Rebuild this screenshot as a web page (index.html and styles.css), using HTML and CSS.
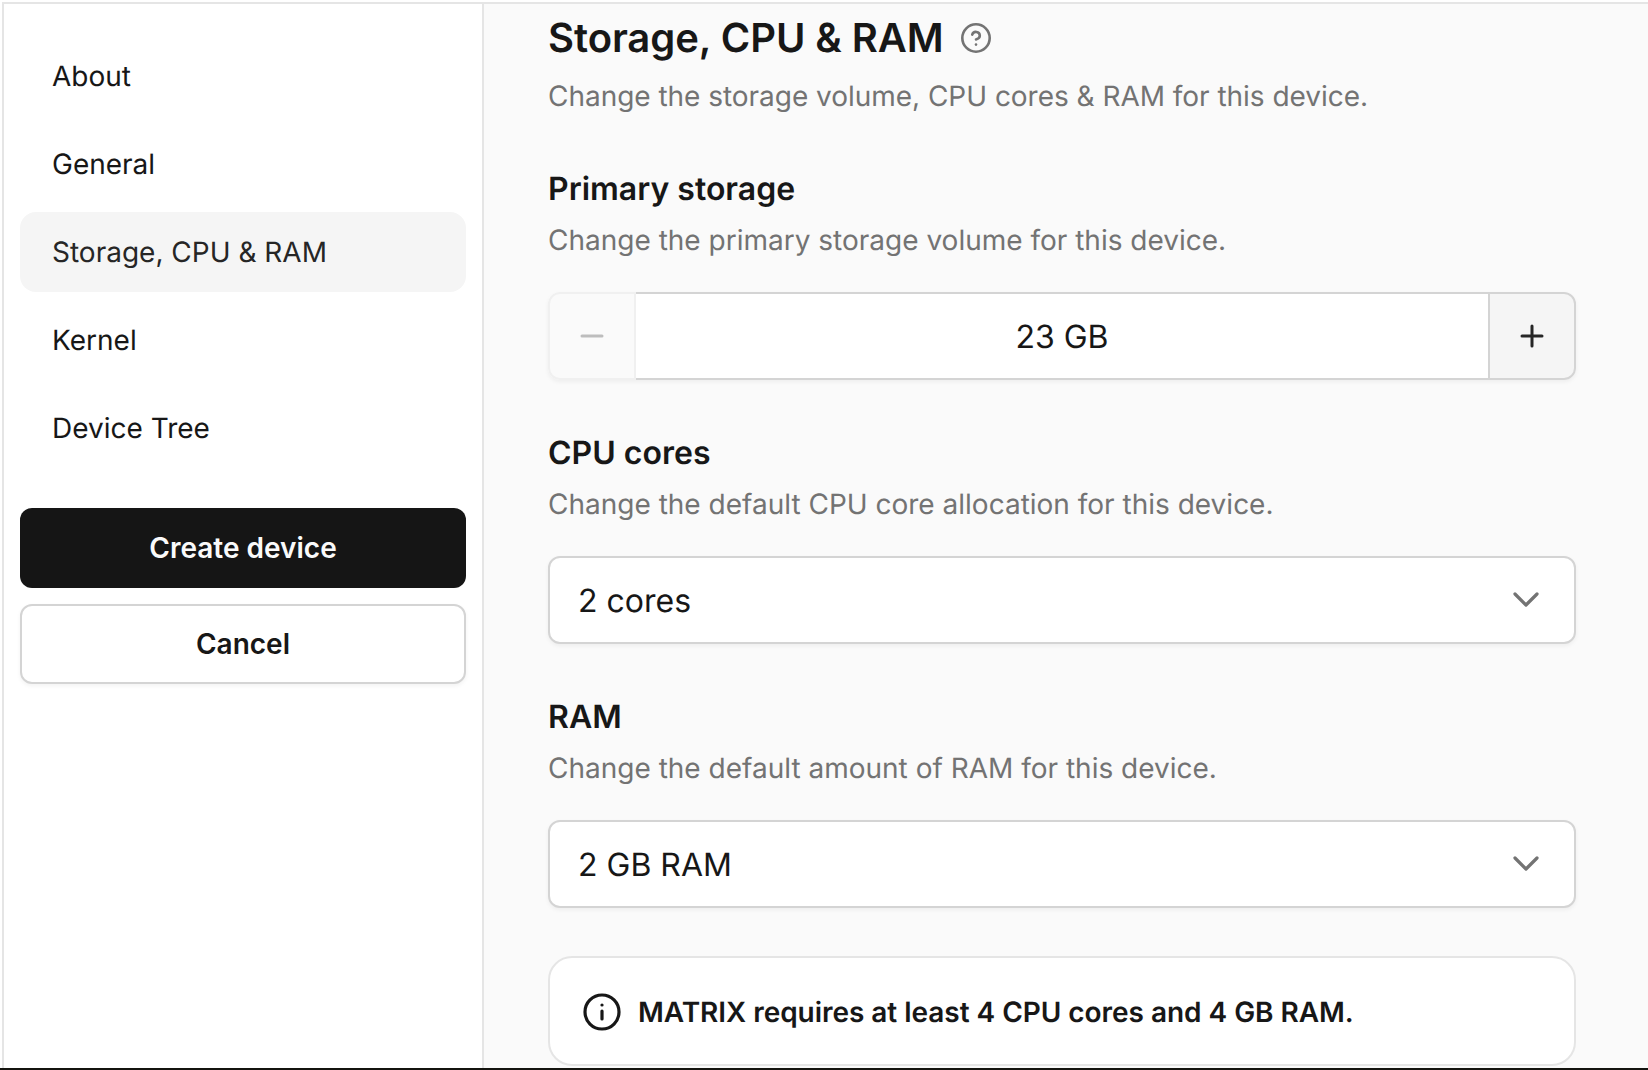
FILE: index.html
```html
<!DOCTYPE html>
<html lang="en">
  <head>
    <meta charset="UTF-8" />
    <meta name="viewport" content="width=device-width, initial-scale=1.0" />
    <title>Storage, CPU &amp; RAM</title>
    <link rel="stylesheet" href="styles.css">
  </head>
  <body>
    <div class="window">
      <aside class="sidebar">
        <nav class="nav">
          <a class="nav-item">About</a>
          <a class="nav-item">General</a>
          <a class="nav-item active">Storage, CPU &amp; RAM</a>
          <a class="nav-item">Kernel</a>
          <a class="nav-item">Device Tree</a>
        </nav>
        <div class="actions">
          <button class="btn btn-primary">Create device</button>
          <button class="btn btn-secondary">Cancel</button>
        </div>
      </aside>
      <main class="content">
        <header class="page-head">
          <h1>Storage, CPU &amp; RAM
            <svg class="help-icon" viewBox="0 0 32 32" width="32" height="32" fill="none" stroke="#737373" stroke-width="2.6" stroke-linecap="round" stroke-linejoin="round">
              <circle cx="16" cy="16" r="13.7" />
              <path d="M12.2 12.6a3.9 3.9 0 0 1 7.6 1.2c0 2.6-3.8 3.6-3.8 3.6" />
              <path d="M16 22.6h.01" />
            </svg>
          </h1>
          <p class="muted">Change the storage volume, CPU cores &amp; RAM for this device.</p>
        </header>

        <section class="field">
          <h2>Primary storage</h2>
          <p class="muted">Change the primary storage volume for this device.</p>
          <div class="stepper">
            <button class="step step-minus">
              <svg viewBox="0 0 24 24" width="24" height="24" fill="none" stroke="#bdbdbd" stroke-width="3" stroke-linecap="round"><path d="M2 12h20" /></svg>
            </button>
            <div class="step-value">23 GB</div>
            <button class="step step-plus">
              <svg viewBox="0 0 24 24" width="24" height="24" fill="none" stroke="#262626" stroke-width="3" stroke-linecap="round"><path d="M2 12h20M12 2v20" /></svg>
            </button>
          </div>
        </section>

        <section class="field">
          <h2>CPU cores</h2>
          <p class="muted">Change the default CPU core allocation for this device.</p>
          <div class="select">
            <span>2 cores</span>
            <svg viewBox="0 0 28 16" width="28" height="16" fill="none" stroke="#737373" stroke-width="3.2" stroke-linecap="round" stroke-linejoin="round"><path d="M3 2l11 11L25 2" /></svg>
          </div>
        </section>

        <section class="field">
          <h2>RAM</h2>
          <p class="muted">Change the default amount of RAM for this device.</p>
          <div class="select">
            <span>2 GB RAM</span>
            <svg viewBox="0 0 28 16" width="28" height="16" fill="none" stroke="#737373" stroke-width="3.2" stroke-linecap="round" stroke-linejoin="round"><path d="M3 2l11 11L25 2" /></svg>
          </div>
        </section>

        <div class="notice">
          <svg viewBox="0 0 40 40" width="40" height="40" fill="none" stroke="#171717" stroke-width="3.2" stroke-linecap="round">
            <circle cx="20" cy="20" r="17" />
            <path d="M20 19v8" />
            <path d="M20 13h.01" />
          </svg>
          <span>MATRIX requires at least 4 CPU cores and 4 GB RAM.</span>
        </div>
      </main>
    </div>
    <div class="desktop-edge"></div>
  </body>
</html>
```

FILE: styles.css
```css
* {
  box-sizing: border-box;
}
html,
body {
  height: 100%;
  margin: 0;
}
body {
  display: flex;
  flex-direction: column;
  background: #fff;
  overflow: hidden;
  padding: 2px 0 0 2px;
  font-family: Inter, "Liberation Sans", sans-serif;
  color: #171717;
  text-rendering: geometricPrecision;
}
.window {
  display: flex;
  flex: 1;
  min-height: 0;
  border-top: 2px solid #e5e5e5;
  border-left: 2px solid #e5e5e5;
  background: #fafafa;
  overflow: hidden;
}
.desktop-edge {
  flex: 0 0 2px;
  margin-left: -2px;
  background: #14140f;
}

/* sidebar */
.sidebar {
  flex: 0 0 480px;
  padding: 32px 16px 0;
  background: #fff;
  border-right: 2px solid #e5e5e5;
}
.nav {
  display: flex;
  flex-direction: column;
  gap: 8px;
}
.nav-item {
  display: flex;
  align-items: center;
  height: 80px;
  padding: 0 32px;
  border-radius: 16px;
  font-size: 28px;
}
.nav-item.active {
  background: #f5f5f5;
  color: #262626;
}
.actions {
  display: flex;
  flex-direction: column;
  gap: 16px;
  margin-top: 40px;
}
.btn {
  height: 80px;
  border-radius: 12px;
  font-family: inherit;
  font-size: 28px;
  font-weight: 600;
}
.btn-primary {
  border: 0;
  background: #151515;
  color: #fafafa;
}
.btn-secondary {
  border: 2px solid #d4d4d4;
  background: #fff;
  color: #171717;
  box-shadow: 0 2px 4px rgba(0, 0, 0, 0.05);
}

/* main column */
.content {
  flex: 1;
  padding: 6px 72px 0 64px;
}
h1 {
  display: flex;
  align-items: center;
  gap: 16px;
  margin: 0;
  font-size: 40px;
  line-height: 56px;
  font-weight: 600;
  letter-spacing: -0.06px;
}
h2 {
  margin: 0 0 7px;
  padding-top: 1px;
  font-size: 32px;
  line-height: 48px;
  font-weight: 600;
}
.muted {
  margin: 0;
  font-size: 28px;
  line-height: 40px;
  color: #737373;
}
.page-head .muted {
  margin-top: 10px;
  letter-spacing: -0.03px;
}
.field {
  margin-top: 48px;
}
.stepper,
.select {
  display: flex;
  height: 88px;
  margin-top: 32px;
  border-radius: 12px;
  background: #fff;
  box-shadow: 0 2px 4px rgba(0, 0, 0, 0.05);
}
.step {
  display: flex;
  align-items: center;
  justify-content: center;
  flex: 0 0 88px;
  padding: 0;
}
.step-minus {
  background: #fafafa;
  border: 2px solid #f0f0f0;
  border-radius: 12px 0 0 12px;
}
.step-plus {
  background: #f5f5f5;
  border: 2px solid #d4d4d4;
  border-radius: 0 12px 12px 0;
}
.step-value {
  flex: 1;
  display: flex;
  align-items: center;
  justify-content: center;
  border-top: 2px solid #d4d4d4;
  border-bottom: 2px solid #d4d4d4;
  font-size: 32px;
}
.select {
  align-items: center;
  justify-content: space-between;
  padding: 0 34px 0 28px;
  border: 2px solid #d4d4d4;
  font-size: 32px;
}
.notice {
  display: flex;
  align-items: center;
  gap: 16px;
  height: 110px;
  margin-top: 48px;
  padding: 2px 32px 0;
  border: 2px solid #e5e5e5;
  border-radius: 24px;
  background: #fff;
  font-size: 28px;
  font-weight: 600;
  letter-spacing: -0.04px;
}
```
